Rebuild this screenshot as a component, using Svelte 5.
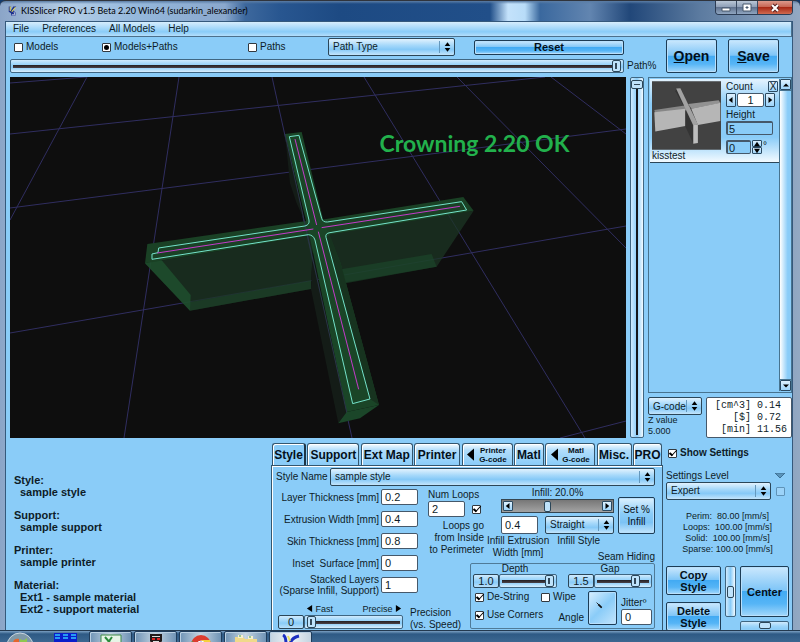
<script>
  let mode = $state('both')
  let pathPercent = $state(100)
  let zLevel = $state(0)
  let activeTab = $state('Style')
  let showSettings = $state(true)

  const menus = ['File', 'Preferences', 'All Models', 'Help']

  const viewModes = [
    { id: 'models', label: 'Models' },
    { id: 'both', label: 'Models+Paths' },
    { id: 'paths', label: 'Paths' },
  ]

  const tabs = [
    { name: 'Style', width: 34 },
    { name: 'Support', width: 52 },
    { name: 'Ext Map', width: 52 },
    { name: 'Printer', width: 46 },
    { name: 'Printer G-code', lines: ['Printer', 'G-code'], width: 51 },
    { name: 'Matl', width: 30 },
    { name: 'Matl G-code', lines: ['Matl', 'G-code'], width: 50 },
    { name: 'Misc.', width: 35 },
    { name: 'PRO', width: 29 },
  ]

  const fields = [
    { id: 'layer', lines: ['Layer Thickness [mm]'], value: '0.2' },
    { id: 'extrusion', lines: ['Extrusion Width [mm]'], value: '0.4' },
    { id: 'skin', lines: ['Skin Thickness [mm]'], value: '0.8' },
    { id: 'inset', lines: ['Inset  Surface [mm]'], value: '0' },
    { id: 'stacked', lines: ['Stacked Layers', '(Sparse Infill, Support)'], value: '1' },
  ]

  const summary = [
    ['Style:', 'sample style'],
    ['Support:', 'sample support'],
    ['Printer:', 'sample printer'],
    ['Material:', 'Ext1 - sample material', 'Ext2 - support material'],
  ]

  const stats = '[cm^3] 0.14\n   [$] 0.72\n [min] 11.56'

  const speeds = ['Perim:  80.00 [mm/s]', 'Loops:  100.00 [mm/s]', 'Solid:  100.00 [mm/s]', 'Sparse: 100.00 [mm/s]']

  // build plate grid, [x1, y1, x2, y2]
  const gridLines = [
    [10, 83, 86, 77],
    [10, 134, 545, 77],
    [10, 208, 626, 129],
    [10, 333, 626, 226],
    [560, 438, 626, 421],
    [87, 77, 10, 220],
    [179, 77, 124, 438],
    [272, 77, 352, 438],
    [364, 77, 585, 438],
    [457, 77, 626, 248],
    [551, 77, 626, 134],
  ]
</script>

{#snippet popup(label, width, split = true)}
  <span class="popup" style:width={width}>
    <select aria-label={label}><option>{label}</option></select>
    <svg class:split viewBox="0 0 16 12" aria-hidden="true"><path d="M8 1l3 4H5zM8 11l3-4H5z" /></svg>
  </span>
{/snippet}

{#snippet arrow(d)}
  <svg class="arrow" viewBox="0 0 8 8" aria-hidden="true"><path {d} /></svg>
{/snippet}

<div class="desktop">
  <div class="window">
    <header class="titlebar">
      <svg class="logo" viewBox="0 0 12 14" aria-hidden="true">
        <path d="M1 1h3v5l3-5h4L7 6l3 3v4H4V10L1 8z" fill="#1c2f8c" />
        <path d="M3 1v6M10 2L5 8" stroke="#e9e05a" stroke-width="1.5" />
        <path d="M5 12h4l-1-4" stroke="#e8edf4" fill="none" />
      </svg>
      <span class="title">KISSlicer PRO v1.5 Beta 2.20 Win64 (sudarkin_alexander)</span>
      <div class="caption">
        <button aria-label="Minimize"><svg viewBox="0 0 20 13"><path d="M6 7h8v3H6z" fill="#fff" stroke="#46566b" /></svg></button>
        <button aria-label="Maximize"><svg viewBox="0 0 20 13"><path d="M6 3h8v7H6z M9 6h2v1H9z" fill="#fff" fill-rule="evenodd" stroke="#46566b" /></svg></button>
        <button class="close" aria-label="Close"><svg viewBox="0 0 20 13"><path d="M7 4l6 6M13 4l-6 6" stroke="#5a2020" stroke-width="4" /><path d="M7 4l6 6M13 4l-6 6" stroke="#fff" stroke-width="2" /></svg></button>
      </div>
    </header>

    <div class="client">
      <nav class="menubar">
        {#each menus as menu}<button>{menu}</button>{/each}
      </nav>

      <div class="toolbar">
        <div class="view">
          <div class="modes">
            {#each viewModes as m}
              <label class="check"><input type="radio" name="mode" value={m.id} bind:group={mode} />{m.label}</label>
            {/each}
            {@render popup('Path Type', '127px')}
            <button class="btn reset">Reset</button>
          </div>
          <input class="range end" type="range" aria-label="Path%" bind:value={pathPercent} />
        </div>
        <span class="percent">Path%</span>
        <button class="btn big"><u>O</u>pen</button>
        <button class="btn big"><u>S</u>ave</button>
      </div>

      <div class="main">
        <div class="viewport">
          <svg viewBox="10 77 616 361" preserveAspectRatio="xMidYMid slice" role="img" aria-label="Model preview">
            {#each gridLines as [x1, y1, x2, y2]}
              <line {x1} {y1} {x2} {y2} stroke="#302e60" />
            {/each}
            <g transform="translate(130 120) scale(.3333)">
              <path d="M45 430L550 345 543 507 180 572z" fill="#1c3524" opacity=".75" />
              <path d="M590 340L1031 272 920 440 600 495z" fill="#1c3524" opacity=".75" />
              <path d="M180 547L543 482 543 507 180 572z" fill="#1d4a2c" opacity=".5" />
              <path d="M620 450L905 402 920 440 635 492z" fill="#1d4a2c" opacity=".6" />
              <path d="M45 430L90 415 182 525 180 572z" fill="#1f5731" opacity=".7" />
              <path d="M465 42L480 190 500 250 525 305zM543 507L625 910 650 876 548 400z" fill="#141c17" />
              <path d="M52 372L530 303 570 300 1000 231 1031 272 590 345 550 345 45 430z" fill="#1a4125" />
              <path d="M465 42L515 36 580 300 632 430 747 855 650 876 535 330z" fill="#1a4527" />
              <path d="M588 350L600 345 632 430 747 855 720 837z" fill="#17331f" />
              <path d="M650 876L747 855 690 895 625 910z" fill="#1b4629" />
              <path d="M465 42L650 876" stroke="#2a3548" stroke-width="3" />
              <path
                d="M478 50L507 46 575 295Q578 307 592 306L995 245 1010 270 600 338Q585 340 588 352L720 837 668 851 555 360Q550 345 535 344L66 418V402L84 398 86 384 525 318Q540 314 537 300z"
                fill="none" stroke="#74e3cb" stroke-width="3" />
              <path d="M495 57L560 315M565 335L686 808M82 399L550 327M575 323L990 259" stroke="#c63acb" stroke-width="3" />
            </g>
          </svg>
          <span class="note">Crowning 2.20 OK</span>
        </div>

        <input class="range vertical" type="range" aria-label="Z level" bind:value={zLevel} />

        <aside class="side">
          <div class="models">
            <div class="list">
              <div class="card">
                <figure>
                  <svg viewBox="96 35 209 207" aria-hidden="true">
                    <path d="M96 35h209v207H96z" fill="#424242" />
                    <path d="M169 57l-2 8 27 48 20 0z" fill="#333" />
                    <path d="M103 122L195 108 212 112 197 125 105 130z" fill="#868686" />
                    <path d="M205 104L298 92 303 101 216 118z" fill="#929292" />
                    <path d="M103 129L197 118V170L106 187z" fill="#b6b6b6" />
                    <path d="M215 118L303 100V155L235 167z" fill="#b6b6b6" />
                    <path d="M197 120L221 167V223L197 172z" fill="#343434" />
                    <path d="M169 57L182 56 235 165 221 169z" fill="#a2a2a2" />
                    <path d="M221 168L235 165V222L221 224z" fill="#bdbdbd" />
                  </svg>
                  <figcaption>kisstest</figcaption>
                </figure>
                <div class="props">
                  <div class="line"><label for="count">Count</label><button class="tiny" aria-label="Remove">X</button></div>
                  <div class="spin">
                    <button class="tiny" aria-label="Fewer">{@render arrow('M6 0v8L1 4z')}</button>
                    <input id="count" class="field count" value="1" />
                    <button class="tiny" aria-label="More">{@render arrow('M2 0v8l5-4z')}</button>
                  </div>
                  <label for="height">Height</label>
                  <input id="height" class="field blue" value="5" />
                  <div class="spin turn">
                    <input class="field blue" value="0" aria-label="Rotation" />
                    <span class="steps">
                      <button class="tiny" aria-label="Rotate up">{@render arrow('M0 7h8L4 1z')}</button>
                      <button class="tiny" aria-label="Rotate down">{@render arrow('M0 1h8L4 7z')}</button>
                    </span>
                    <span>°</span>
                  </div>
                </div>
              </div>
            </div>
            <div class="scroll">
              <button class="tiny" aria-label="Scroll up">{@render arrow('M0 6h8L4 2z')}</button>
              <div class="bar"></div>
              <button class="tiny" aria-label="Scroll down">{@render arrow('M0 2h8L4 6z')}</button>
            </div>
          </div>
          <div class="output">
            <div class="zinfo">
              {@render popup('G-code', '54px')}
              <span>Z value<br />5.000</span>
            </div>
            <pre class="stats">{stats}</pre>
          </div>
        </aside>
      </div>

      <div class="bottom">
        <div class="summary">
          {#each summary as [head, ...items]}
            <div>
              <p>{head}</p>
              {#each items as item}<p class="item">{item}</p>{/each}
            </div>
          {/each}
        </div>

        <section class="settings">
          <div class="tabs" role="tablist">
            {#each tabs as tab}
              <button
                role="tab"
                aria-selected={activeTab === tab.name}
                class:active={activeTab === tab.name}
                class:small={!!tab.lines}
                style:width="{tab.width}px"
                onclick={() => (activeTab = tab.name)}
              >
                {#if tab.lines}
                  <svg viewBox="0 0 8 14" aria-hidden="true"><path d="M8 0v14L0 7z" /></svg>
                  <span>{tab.lines[0]}<br />{tab.lines[1]}</span>
                {:else}{tab.name}{/if}
              </button>
            {/each}
          </div>

          <div class="panel">
            <div class="name"><span>Style Name</span>{@render popup('sample style', '100%')}</div>
            <div class="grid">
              <div class="fields">
                {#each fields as f}
                  <label for={f.id}>{#each f.lines as line}<span>{line}</span>{/each}</label>
                  <input id={f.id} class="field" value={f.value} />
                {/each}
              </div>

              <div class="loops">
                <label for="loops">Num Loops</label>
                <div class="pair">
                  <input id="loops" class="field" value="2" />
                  <input type="checkbox" id="inside" checked />
                </div>
                <label class="right" for="inside">Loops go<br />from Inside<br />to Perimeter</label>
              </div>

              <div class="infill">
                <div class="density">
                  <label for="density">Infill: 20.0%</label>
                  <div class="hscroll">
                    <button class="tiny" aria-label="Less infill">{@render arrow('M6 0v8L1 4z')}</button>
                    <input id="density" type="range" value="38" />
                    <button class="tiny" aria-label="More infill">{@render arrow('M2 0v8l5-4z')}</button>
                  </div>
                  <div class="pair">
                    <input id="infillwidth" class="field" value="0.4" />
                    {@render popup('Straight', '70px')}
                  </div>
                </div>
                <button class="btn plain">Set %<br />Infill</button>
                <div class="captions">
                  <label for="infillwidth">Infill Extrusion<br />Width [mm]</label>
                  <span>Infill Style</span>
                </div>
              </div>

              <div class="seam">
                <p>Seam Hiding</p>
                <div class="box">
                  <div class="sliders">
                    <label>Depth<span class="valued"><b>1.0</b><input class="range" type="range" value="100" /></span></label>
                    <label>Gap<span class="valued"><b>1.5</b><input class="range" type="range" value="78" /></span></label>
                  </div>
                  <div class="options">
                    <div class="ticks">
                      <label class="check"><input type="checkbox" checked />De-String</label>
                      <label class="check"><input type="checkbox" />Wipe</label>
                      <label class="check"><input type="checkbox" checked />Use Corners</label>
                      <span class="angle">Angle</span>
                    </div>
                    <button class="btn dial" aria-label="Angle">
                      <svg viewBox="0 0 32 32" aria-hidden="true"><path d="M9 9l6 6" stroke="#111" /><path d="M11 11l4 4" stroke="#111" stroke-width="2" /></svg>
                    </button>
                    <label class="jitter">Jitterº<input class="field" value="0" /></label>
                  </div>
                </div>
              </div>

              <div class="precision">
                <div>
                  <div class="ends">
                    <span>{@render arrow('M7 0v8L1 4z')} Fast</span>
                    <span>Precise {@render arrow('M1 0v8l6-4z')}</span>
                  </div>
                  <span class="valued"><b>0</b><input id="precision" class="range" type="range" value="0" /></span>
                </div>
                <label for="precision">Precision<br />(vs. Speed)</label>
              </div>
            </div>
          </div>
        </section>

        <div class="controls">
          <label class="check strong"><input type="checkbox" bind:checked={showSettings} />Show Settings</label>
          <div class="level">
            <span>Settings Level</span>
            <svg class="drop" viewBox="0 0 10 6" aria-hidden="true"><path d="M0 0h10L5 5z" /></svg>
          </div>
          <div class="level">
            {@render popup('Expert', '105px')}
            <input type="checkbox" class="faint" aria-label="Lock level" />
          </div>
          <div class="speeds">{#each speeds as s}<div>{s}</div>{/each}</div>
          <div class="actions">
            <button class="btn copy">Copy<br />Style</button>
            <button class="btn delete">Delete<br />Style</button>
            <input class="range vertical pan" type="range" aria-label="Pan vertically" />
            <button class="btn center">Center</button>
            <input class="range pan" type="range" aria-label="Pan horizontally" />
          </div>
        </div>
      </div>
    </div>
  </div>

  <footer class="taskbar">
    <button class="start" aria-label="Start">
      <svg viewBox="0 0 28 12"><circle cx="14" cy="14" r="13" fill="#7f99a8" stroke="#c9d6e0" /><path d="M7 12c0-5 3-6 6-5v5z" fill="#e3662c" /><path d="M14 7c3 2 5 1 7-1v6h-7z" fill="#8fc650" /></svg>
    </button>
    <span class="quick">
      <svg viewBox="0 0 23 9" aria-hidden="true"><path d="M0 0h23v9H0z" fill="#0a1ecb" /><path d="M1 2h5M9 2h5M17 2h5M1 5h5M9 5h5M17 5h5" stroke="#31c6ff" stroke-width="1.5" /></svg>
    </span>
    <button aria-label="Spreadsheet"><svg viewBox="0 0 24 10"><path d="M2 1h20v9H2z" fill="#e6f4e6" stroke="#3f8a48" /><path d="M6 3l6 7M13 3L8 10" stroke="#2c8a3c" stroke-width="2" /></svg></button>
    <button aria-label="Monitor"><svg viewBox="0 0 24 10"><path d="M6 0h12v7l-2 3H8L6 7z" fill="#221a1a" /><path d="M8 2h8v1H8zM9 7h6v2H9z" fill="#ddd" /><path d="M8 4h3v2H8zM13 4h3v2h-3z" fill="#e02626" /></svg></button>
    <button aria-label="Browser"><svg viewBox="0 0 24 10"><circle cx="12" cy="11" r="10" fill="#dc3c2e" /><path d="M2 10a10 10 0 0 1 1-3l5 3z" fill="#3fa64a" /><path d="M12 6h9l1 4h-5z" fill="#f5cf3c" /><circle cx="12" cy="11" r="4" fill="#4a84e0" stroke="#fff" /></svg></button>
    <button aria-label="Explorer"><svg viewBox="0 0 24 10"><path d="M1 3h8l2 2h12v5H1z" fill="#f0d98a" /><path d="M4 1h5v3H4zM14 2h5v3h-5z" fill="#f7efcf" /><path d="M5 2h2M15 3h2" stroke="#3aa04a" /></svg></button>
    <button class="running" aria-label="KISSlicer"><svg viewBox="0 0 24 10"><path d="M4 1c2 1 3 5 3 9M20 2c-5 1-8 4-9 8" fill="none" stroke="#1c2fc0" stroke-width="3" /><path d="M9 2l2 5" stroke="#e9e05a" stroke-width="2" /></svg></button>
  </footer>
</div>

<style>
  :global(body) {
    margin: 0;
    background: #143a6b;
  }

  .desktop {
    display: flex;
    flex-direction: column;
    height: 100vh;
    overflow: hidden;
    font: 10px/12px "Liberation Sans", Arial, sans-serif;
    color: #0e1c28;
  }

  .desktop * {
    box-sizing: border-box;
  }

  button,
  input,
  select {
    margin: 0;
    padding: 0;
    font: inherit;
    color: inherit;
  }

  p {
    margin: 0;
  }

  /* ── Window frame ── */
  .window {
    flex: 1;
    min-height: 0;
    display: flex;
    flex-direction: column;
    padding: 0 7px 0 5px;
    border-top: 1px solid #30343c;
    border-radius: 6px 6px 0 0;
    background:
      linear-gradient(#5b7da5 0, transparent 3px),
      linear-gradient(90deg, #8ba5c8 0, #b3cde6 70px, #95b8dc 135px, #8aa8cd 225px, #3d689d 245px, #285690 280px, #1d4a83 340px, #214f89 490px, #c4e2fb 508px, #b8dcf8 525px, #3a689e 540px, #6285b0 590px, #214779 630px, #5c7ba0 700px, #93a9c3 100%);
  }

  .titlebar {
    display: flex;
    align-items: center;
    height: 20px;
    padding-left: 3px;
  }

  .logo {
    width: 9px;
    height: 12px;
  }

  .title {
    flex: 1;
    padding-left: 4px;
    font: 9px/12px Lato, "Open Sans", sans-serif;
    color: #000;
  }

  .caption {
    display: flex;
    align-self: flex-start;
    border: 1px solid #2c3c54;
    border-top: 0;
    border-radius: 0 0 4px 4px;
    overflow: hidden;
  }

  .caption button {
    width: 21px;
    height: 13px;
    border: 0;
    border-right: 1px solid #3a4a62;
    background: linear-gradient(#b9c6d6, #8a9bb3 50%, #61738f 50%, #8fa5c0);
  }

  .caption .close {
    width: 34px;
    border: 0;
    background: linear-gradient(#dd9a8c, #c5604d 50%, #a92a16 50%, #d06a50);
  }

  .caption svg {
    display: block;
    width: 20px;
    height: 13px;
    margin: auto;
  }

  .client {
    flex: 1;
    min-height: 0;
    display: flex;
    flex-direction: column;
    border: 1px solid #35597c;
    border-bottom: 0;
    background: #8accf8;
  }

  .menubar {
    display: flex;
    gap: 13px;
    height: 15px;
    padding: 0 7px;
    border: 1px solid #4c708c;
    border-width: 0 1px 1px 0;
    background: linear-gradient(#d6edfd, #8accf8 70%, #b4defb);
  }

  .menubar button {
    border: 0;
    background: none;
  }

  /* ── Shared controls ── */
  .btn {
    border: 1px solid #1d3c55;
    border-radius: 2px;
    background: linear-gradient(#cbe8fd, #7ec5f7 48%, #42aaf3 50%, #56b5f6 75%, #a4d8fb);
    box-shadow: inset 0 0 0 1px #b9e0fc;
    font-weight: bold;
    color: #04101a;
  }

  .btn.plain {
    background: linear-gradient(#ddf1fe, #8accf8 45%, #7cc3f5 70%, #c3e5fc);
    font-weight: normal;
  }

  .tiny {
    display: flex;
    align-items: center;
    justify-content: center;
    width: 10px;
    border: 1px solid #2b4a62;
    border-radius: 1px;
    background: linear-gradient(#dff1fe, #9dd4fa);
  }

  .arrow {
    flex: none;
    width: 6px;
    height: 6px;
    fill: #000;
  }

  .field {
    width: 37px;
    height: 16px;
    padding: 0 3px;
    border: 1px solid #45586a;
    border-radius: 2px;
    background: #fff;
    font-size: 11px;
  }

  .field.blue {
    border-width: 2px 1px 1px 2px;
    background: #8accf8;
    padding-left: 1px;
  }

  .check {
    display: flex;
    align-items: center;
    gap: 3px;
    white-space: nowrap;
  }

  input[type='checkbox'],
  input[type='radio'] {
    appearance: none;
    flex: none;
    display: grid;
    place-items: center;
    width: 9px;
    height: 9px;
    border: 1px solid #32393f;
    border-radius: 1px;
    background: #fff;
  }

  input[type='checkbox']:checked::before {
    content: '';
    width: 6px;
    height: 3px;
    border: solid #000;
    border-width: 0 0 1px 2px;
    transform: translateY(-1px) rotate(-48deg);
  }

  input[type='radio']:checked::before {
    content: '';
    width: 5px;
    height: 5px;
    border-radius: 50%;
    background: #000;
  }

  input[type='checkbox'].faint {
    border-color: #5f93b8;
    background: #9cd3f9;
  }

  .popup {
    position: relative;
    display: block;
    height: 18px;
  }

  .popup select {
    appearance: none;
    display: block;
    width: 100%;
    height: 100%;
    padding: 0 4px;
    border: 1px solid #2b4658;
    border-radius: 2px;
    background: linear-gradient(#e1f2fe, #a5d8fa 40%, #86c9f7 65%, #c3e5fc);
    white-space: nowrap;
  }

  .popup svg {
    position: absolute;
    top: 3px;
    right: 0;
    width: 16px;
    height: 12px;
    pointer-events: none;
  }

  .popup .split {
    border-left: 1px solid #6498bd;
  }

  .range {
    appearance: none;
    display: block;
    width: 100%;
    height: 14px;
    padding: 0 2px;
    border: 1px solid #3f6682;
    border-radius: 2px;
    background: linear-gradient(#cfeafd, #9dd5fa 35%, #8accf8 60%, #d9effe);
  }

  .range::-webkit-slider-runnable-track {
    height: 12px;
    background: linear-gradient(transparent 5px, #221f22 5px, #4b4248 8px, transparent 8px);
  }

  .range::-webkit-slider-thumb {
    appearance: none;
    width: 9px;
    height: 12px;
    border: 1px solid #2b4658;
    border-radius: 2px;
    background: linear-gradient(90deg, transparent 2px, #33495a 2px, #33495a 4px, transparent 4px) 0 2px / 7px 6px no-repeat, #bfe3fb;
  }

  .range.vertical {
    writing-mode: vertical-lr;
    width: 14px;
    height: auto;
    padding: 2px 0;
    background: linear-gradient(90deg, #cfeafd, #8accf8 50%, #f2faff);
  }

  .range.vertical::-webkit-slider-runnable-track {
    width: 12px;
    height: auto;
    background: linear-gradient(90deg, transparent 5px, #141619 5px, #141619 7px, transparent 7px);
  }

  .range.vertical::-webkit-slider-thumb {
    width: 12px;
    height: 9px;
    background: linear-gradient(#33495a, #33495a) 2px 3px / 6px 1px no-repeat, #bfe3fb;
  }

  .valued {
    display: flex;
  }

  .valued b {
    flex: 0 0 26px;
    border: 1px solid #2b4658;
    border-radius: 2px;
    background: linear-gradient(#cfeafd, #8accf8 60%, #b9e0fb);
    font-weight: normal;
    font-size: 11px;
    text-align: center;
  }

  .valued .range {
    flex: 1;
    min-width: 0;
  }

  /* ── Toolbar ── */
  .toolbar {
    display: flex;
    align-items: flex-end;
    padding: 1px 13px 4px 4px;
  }

  .view {
    flex: 1;
  }

  .modes {
    display: grid;
    grid-template-columns: 88px 146px 80px 127px 1fr;
    align-items: center;
    padding-left: 4px;
    margin-bottom: 3px;
  }

  .reset {
    height: 15px;
    margin-left: 19px;
    font-size: 11px;
    line-height: 11px;
  }

  .percent {
    width: 42px;
    padding: 0 0 1px 3px;
  }

  .big {
    width: 51px;
    height: 34px;
    font-size: 14px;
    line-height: 16px;
  }

  .big + .big {
    margin-left: 11px;
  }

  /* ── Viewport and model list ── */
  .main {
    flex: 1;
    min-height: 0;
    display: flex;
    padding-left: 4px;
  }

  .viewport {
    position: relative;
    flex: 1;
    background: #0e0e0e;
    overflow: hidden;
  }

  .viewport svg {
    position: absolute;
    width: 100%;
    height: 100%;
  }

  .note {
    position: absolute;
    top: 52px;
    left: 60%;
    font: bold 23px/28px Lato, sans-serif;
    color: #22b14c;
    white-space: nowrap;
  }

  .main > .range {
    margin: 0 4px;
  }

  .side {
    flex: 0 0 144px;
    display: flex;
    flex-direction: column;
  }

  .models {
    flex: 1;
    display: flex;
    border: 1px solid #47738f;
    padding: 1px 0 1px 1px;
    margin-bottom: 4px;
  }

  .list {
    flex: 1;
    border-right: 1px solid #47738f;
  }

  .card {
    display: flex;
    gap: 5px;
    height: 84px;
    padding: 2px 1px 0 2px;
    border-bottom: 1px solid #2b4658;
    background: linear-gradient(#e4f3fe, #8accf8 30%, #8accf8 70%, #f2faff);
  }

  figure {
    width: 69px;
    margin: 0;
  }

  figure svg {
    display: block;
    width: 69px;
    height: 69px;
  }

  .props {
    flex: 1;
  }

  .props label {
    display: block;
  }

  .line {
    display: flex;
    justify-content: space-between;
    height: 12px;
  }

  .line .tiny {
    height: 11px;
  }

  .spin {
    display: flex;
    gap: 1px;
    height: 14px;
    margin-bottom: 2px;
  }

  .spin .field {
    height: 14px;
  }

  .field.count {
    width: 27px;
    text-align: center;
  }

  #height {
    display: block;
    width: 47px;
    height: 14px;
    margin-bottom: 5px;
  }

  .turn .field {
    width: 25px;
  }

  .steps .tiny {
    height: 7px;
  }

  .scroll {
    display: flex;
    flex-direction: column;
    width: 11px;
  }

  .scroll .tiny {
    width: 11px;
    height: 11px;
  }

  .bar {
    flex: 1;
    border: 1px solid #47738f;
    border-width: 1px 0;
    background: linear-gradient(90deg, #fff, #8accf8 70%);
  }

  .output {
    display: flex;
    justify-content: space-between;
    height: 41px;
  }

  .zinfo {
    font-size: 9px;
    line-height: 11px;
  }

  .zinfo select {
    font-size: 10px;
    padding-right: 0;
  }

  .stats {
    width: 86px;
    margin: 0;
    padding: 2px 0 0 8px;
    border: 1px solid #45586a;
    border-radius: 2px;
    background: #fff;
    font: 10px/12px "Liberation Mono", monospace;
  }

  /* ── Bottom strip ── */
  .bottom {
    flex: 0 0 192px;
    display: flex;
    overflow: hidden;
  }

  .summary {
    flex: 1;
    padding: 36px 0 0 8px;
    font-size: 11px;
    font-weight: bold;
  }

  .summary div {
    margin-bottom: 11px;
  }

  .item {
    padding-left: 6px;
  }

  .settings {
    flex: 0 0 392px;
    padding-top: 5px;
  }

  .tabs {
    display: flex;
    justify-content: space-between;
    padding: 0 1px;
  }

  .tabs button {
    height: 22px;
    border: 1px solid #34566e;
    border-bottom: 0;
    border-radius: 3px 3px 0 0;
    background: linear-gradient(#f4fbff, #b1ddfb 30%, #8accf8);
    box-shadow: inset 1px 1px #fff;
    font-size: 12px;
    font-weight: bold;
    white-space: nowrap;
    color: #04101a;
  }

  .tabs .active {
    border-right: 2px solid #1d3444;
    background: #8accf8;
  }

  .tabs .small {
    display: flex;
    align-items: center;
    justify-content: space-evenly;
    font-size: 8px;
    line-height: 9px;
  }

  .small svg {
    width: 7px;
    height: 13px;
  }

  .panel {
    border: 1px solid #34566e;
    border-bottom: 0;
    box-shadow: inset 1px 1px #fff;
    padding: 2px 7px 0 4px;
  }

  .name {
    display: flex;
    align-items: center;
    margin-bottom: 1px;
  }

  .name span:first-child {
    flex: 0 0 54px;
  }

  .grid {
    display: grid;
    grid-template-columns: 142px 52px 16px 1fr;
    grid-template-rows: 64px 52px 28px;
  }

  .fields {
    grid-area: 1 / 1 / 3 / 2;
    display: grid;
    grid-template-columns: 1fr 37px;
    grid-auto-rows: 16px;
    gap: 6px 2px;
    align-items: center;
    padding-top: 2px;
    text-align: right;
    white-space: pre;
  }

  .fields span {
    display: block;
    line-height: 11px;
  }

  .loops {
    grid-area: 1 / 2 / 2 / 4;
    padding: 2px 2px 0 10px;
    white-space: nowrap;
  }

  .loops .right {
    display: block;
    margin-top: 3px;
    text-align: right;
  }

  .pair {
    display: flex;
    align-items: center;
    gap: 7px;
  }

  .infill {
    grid-area: 1 / 4 / 2 / 5;
    display: grid;
    grid-template-columns: 113px 37px;
    gap: 1px 4px;
    justify-content: end;
    align-content: start;
    align-items: end;
  }

  .density label {
    display: block;
    text-align: center;
  }

  .density .pair {
    justify-content: space-between;
    margin-top: 3px;
  }

  .density .field {
    height: 18px;
  }

  .hscroll {
    display: flex;
    align-items: center;
    height: 14px;
    padding: 0 1px;
    border: 1px solid #35454f;
    background: linear-gradient(#777, #a3a3a3);
  }

  .hscroll .tiny {
    height: 10px;
  }

  .hscroll input {
    appearance: none;
    flex: 1;
    min-width: 0;
    background: none;
  }

  .hscroll input::-webkit-slider-thumb {
    appearance: none;
    width: 7px;
    height: 11px;
    border: 1px solid #2b4658;
    border-radius: 2px;
    background: #bfe3fb;
  }

  .infill .btn {
    height: 37px;
  }

  .captions {
    grid-column: 1 / 3;
    display: flex;
    gap: 8px;
    margin-left: -14px;
    text-align: center;
    white-space: nowrap;
  }

  .seam {
    grid-area: 2 / 3 / 4 / 5;
  }

  .seam p {
    text-align: right;
  }

  .box {
    height: 66px;
    padding: 0 2px;
    border: 1px solid #4f7b98;
    border-radius: 2px;
  }

  .sliders {
    display: flex;
    justify-content: space-between;
    text-align: center;
    line-height: 10px;
  }

  .sliders label {
    width: 84px;
  }

  .sliders b {
    line-height: 12px;
  }

  .options {
    display: flex;
    gap: 4px;
    padding-top: 3px;
  }

  .ticks {
    display: grid;
    grid-template-columns: 66px 43px;
    grid-template-rows: 12px 24px;
    align-items: center;
    padding-left: 2px;
  }

  .angle {
    padding-top: 6px;
    text-align: right;
  }

  .dial {
    width: 33px;
    height: 34px;
    background: linear-gradient(135deg, #d9effe, #8accf8 50%, #c3e5fc);
  }

  .dial svg {
    display: block;
  }

  .jitter {
    padding-top: 6px;
  }

  .jitter .field {
    display: block;
    width: 31px;
  }

  .precision {
    grid-area: 3 / 1 / 4 / 3;
    display: flex;
    gap: 7px;
    padding-left: 2px;
    white-space: nowrap;
  }

  .precision > div {
    flex: 0 0 125px;
  }

  .precision label {
    padding-top: 4px;
  }

  .precision .arrow {
    width: 7px;
    height: 9px;
    vertical-align: -1px;
  }

  .ends {
    display: flex;
    justify-content: space-between;
    padding: 0 1px 0 28px;
    font-size: 9px;
  }

  /* ── Right-hand controls ── */
  .controls {
    flex: 0 0 129px;
    padding: 9px 3px 0 3px;
  }

  .strong {
    padding: 0 2px;
    font-weight: bold;
    margin-bottom: 11px;
  }

  .level {
    display: flex;
    justify-content: space-between;
    align-items: center;
    padding-right: 4px;
  }

  .drop {
    width: 10px;
    height: 6px;
    fill: #5a94bb;
    stroke: #3d6f93;
  }

  .speeds {
    margin: 11px 0;
    font-size: 9px;
    line-height: 11px;
    text-align: center;
    white-space: pre;
  }

  .actions {
    display: grid;
    grid-template-columns: 55px 11px 1fr;
    grid-template-rows: 29px 18px 18px;
    column-gap: 4px;
  }

  .copy,
  .delete {
    height: 29px;
    font-size: 11px;
    line-height: 12px;
    padding: 0;
  }

  .delete {
    grid-area: 2 / 1 / 4 / 2;
    margin-top: 7px;
  }

  .center {
    grid-area: 1 / 3 / 3 / 4;
    height: 51px;
    font-size: 11px;
  }

  .range.pan {
    grid-area: 3 / 3 / 4 / 4;
    margin-top: 8px;
  }

  .range.vertical.pan {
    grid-area: 1 / 2 / 3 / 3;
    width: 11px;
    height: 51px;
    margin-top: 0;
  }

  .range.pan::-webkit-slider-runnable-track {
    width: auto;
    background: none;
  }

  .range.pan::-webkit-slider-thumb {
    width: 12px;
    height: 7px;
    background: #bfe3fb;
  }

  .range.vertical.pan::-webkit-slider-thumb {
    width: 7px;
    height: 12px;
  }

  /* ── Taskbar ── */
  .taskbar {
    flex: 0 0 12px;
    display: flex;
    gap: 2px;
    padding-left: 6px;
    border-top: 1px solid #23394f;
    background: linear-gradient(#7ba0c2, #2e5a85 3px, #3c6791);
    overflow: hidden;
  }

  .taskbar button {
    width: 43px;
    height: 14px;
    border: 1px solid #1f3c5b;
    border-radius: 2px 2px 0 0;
    background: linear-gradient(90deg, #6f93b5, #c5d5e2 50%, #6f93b5);
    box-shadow: inset 1px 1px #b9cfe2;
  }

  .taskbar button svg {
    display: block;
    width: 24px;
    height: 10px;
    margin: 1px auto 0;
  }

  .taskbar .start {
    width: 28px;
    border: 0;
    background: none;
    box-shadow: none;
  }

  .taskbar .start svg {
    width: 28px;
    height: 12px;
    margin: 0;
  }

  .quick {
    width: 51px;
    padding: 2px 0 0 18px;
  }

  .quick svg {
    display: block;
    width: 23px;
    height: 9px;
  }

  .taskbar .running {
    background: linear-gradient(90deg, #c3d3e0, #f0f4f7 50%, #c3d3e0);
  }
</style>
